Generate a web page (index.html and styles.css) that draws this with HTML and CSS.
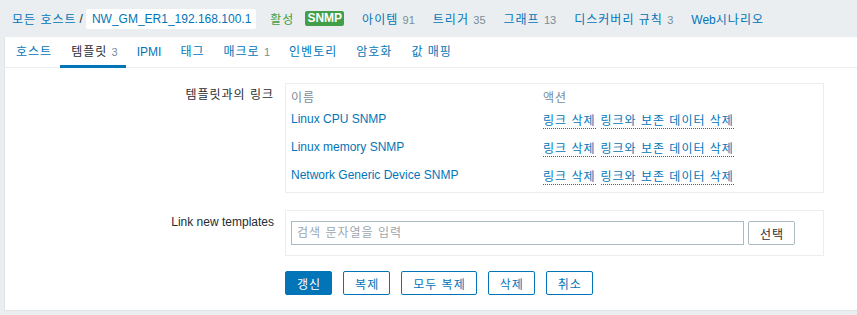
FILE: index.html
```html
<!DOCTYPE html>
<html lang="ko">
<head>
    <meta charset="UTF-8">
    <meta name="viewport" content="width=device-width, initial-scale=1.0">
    <title>호스트 - 템플릿</title>
    <link rel="stylesheet" href="styles.css">
</head>
<body>
    <div class="header-nav">
        <a class="link" href="#">모든 호스트</a>
        <span class="separator">/</span>
        <span class="current-host latin">NW_GM_ER1_192.168.100.1</span>
        <span class="status-on">활성</span>
        <span class="badge latin">SNMP</span>
        <a class="nav-item" href="#">아이템 <span class="count">91</span></a>
        <a class="nav-item" href="#">트리거 <span class="count">35</span></a>
        <a class="nav-item" href="#">그래프 <span class="count">13</span></a>
        <a class="nav-item" href="#">디스커버리 규칙 <span class="count">3</span></a>
        <a class="nav-item" href="#"><span class="latin">Web</span>시나리오</a>
    </div>

    <div class="container">
        <ul class="tabs">
            <li class="tab"><a href="#">호스트</a></li>
            <li class="tab active"><a href="#">템플릿 <span class="count">3</span></a></li>
            <li class="tab latin"><a href="#">IPMI</a></li>
            <li class="tab"><a href="#">태그</a></li>
            <li class="tab"><a href="#">매크로 <span class="count">1</span></a></li>
            <li class="tab"><a href="#">인벤토리</a></li>
            <li class="tab"><a href="#">암호화</a></li>
            <li class="tab"><a href="#">값 매핑</a></li>
        </ul>

        <form class="form-grid">
            <label class="form-label">템플릿과의 링크</label>
            <div class="field-box">
                <table class="linked-table">
                    <thead>
                        <tr><th class="col-name">이름</th><th>액션</th></tr>
                    </thead>
                    <tbody>
                        <tr>
                            <td class="latin"><a href="#">Linux CPU SNMP</a></td>
                            <td><a class="action-link" href="#">링크 삭제</a><a class="action-link" href="#">링크와 보존 데이터 삭제</a></td>
                        </tr>
                        <tr>
                            <td class="latin"><a href="#">Linux memory SNMP</a></td>
                            <td><a class="action-link" href="#">링크 삭제</a><a class="action-link" href="#">링크와 보존 데이터 삭제</a></td>
                        </tr>
                        <tr>
                            <td class="latin"><a href="#">Network Generic Device SNMP</a></td>
                            <td><a class="action-link" href="#">링크 삭제</a><a class="action-link" href="#">링크와 보존 데이터 삭제</a></td>
                        </tr>
                    </tbody>
                </table>
            </div>

            <label class="form-label latin">Link new templates</label>
            <div class="field-box multiselect-box">
                <input type="text" class="multiselect-input" placeholder="검색 문자열을 입력">
                <button type="button" class="btn-grey">선택</button>
            </div>

            <div class="form-actions">
                <button type="button" class="btn-main">갱신</button>
                <button type="button" class="btn-alt">복제</button>
                <button type="button" class="btn-alt">모두 복제</button>
                <button type="button" class="btn-alt">삭제</button>
                <button type="button" class="btn-alt">취소</button>
            </div>
        </form>
    </div>
</body>
</html>
```

FILE: styles.css
```css
body {
    margin: 0;
    background-color: #ebeef1;
    font-family: "Liberation Sans", Arial, "Noto Sans CJK KR", sans-serif;
    font-size: 12px;
    letter-spacing: 1px;
    color: #1f2c33;
}
.latin, .count {
    letter-spacing: 0;
}
a {
    text-decoration: none;
    color: #0275b8;
}
.header-nav {
    display: flex;
    align-items: center;
    height: 37px;
    padding-left: 12px;
    white-space: nowrap;
}
.separator {
    margin: 0 2px 0 3px;
}
.current-host {
    background: white;
    color: #0275b8;
    height: 20px;
    line-height: 20px;
    padding: 0 5px 0 6px;
    border-radius: 2px;
}
.status-on {
    color: #429e47;
    margin-left: 14px;
}
.badge {
    margin-left: 11px;
    background: #429e47;
    color: white;
    font-weight: bold;
    height: 15px;
    line-height: 15px;
    padding: 0 2px;
    border-radius: 2px;
}
.nav-item {
    margin-left: 18px;
}
.count {
    color: #768d99;
    font-size: 11px;
}
.container {
    margin-left: 4px;
    background: white;
    border-left: 1px solid #dfe4e7;
    border-bottom: 1px solid #dfe4e7;
    padding-bottom: 15px;
}
.tabs {
    display: flex;
    list-style: none;
    margin: 0;
    padding: 0;
    height: 31px;
    box-shadow: inset 0 -1px #ebeef1;
}
.tab {
    box-sizing: border-box;
    height: 31px;
    line-height: 30px;
    padding: 0 8px 0 11px;
}
.tab.active {
    border-bottom: 3px solid #0275b8;
}
.tab.active a {
    color: #1f2c33;
}
.form-grid {
    display: grid;
    grid-template-columns: 269px 539px;
    column-gap: 11px;
    row-gap: 17px;
    padding-top: 15px;
}
.form-label {
    text-align: right;
    line-height: 18px;
    padding-top: 3px;
}
.field-box {
    border: 1px solid #ebeef1;
    padding: 3px 5px;
}
.linked-table {
    border-collapse: collapse;
}
.linked-table th {
    text-align: left;
    font-weight: normal;
    color: #768d99;
    height: 18px;
    padding: 0;
}
.linked-table .col-name {
    width: 252px;
}
.linked-table td {
    height: 28px;
    padding: 0;
}
.action-link {
    border-bottom: 1px dotted #0275b8;
    margin-right: 5px;
}
.multiselect-box {
    display: flex;
    gap: 4px;
    padding: 10px 5px;
}
.multiselect-input {
    box-sizing: border-box;
    width: 453px;
    height: 24px;
    border: 1px solid #acbbc2;
    padding: 0 5px;
    font: inherit;
    letter-spacing: inherit;
    margin: 0;
}
.multiselect-input::placeholder {
    color: #9ba7ad;
}
button {
    box-sizing: border-box;
    height: 24px;
    padding: 0 10px 0 11px;
    border-radius: 2px;
    font: inherit;
    letter-spacing: inherit;
    cursor: pointer;
    margin: 0;
}
.btn-grey {
    background: white;
    border: 1px solid #acbbc2;
    color: #1f2c33;
}
.form-actions {
    grid-column: 2;
    display: flex;
    gap: 11px;
    margin-top: -2px;
}
.btn-main {
    background: #0275b8;
    border: 1px solid #0275b8;
    color: white;
}
.btn-alt {
    background: white;
    border: 1px solid #0275b8;
    color: #0275b8;
}
```
